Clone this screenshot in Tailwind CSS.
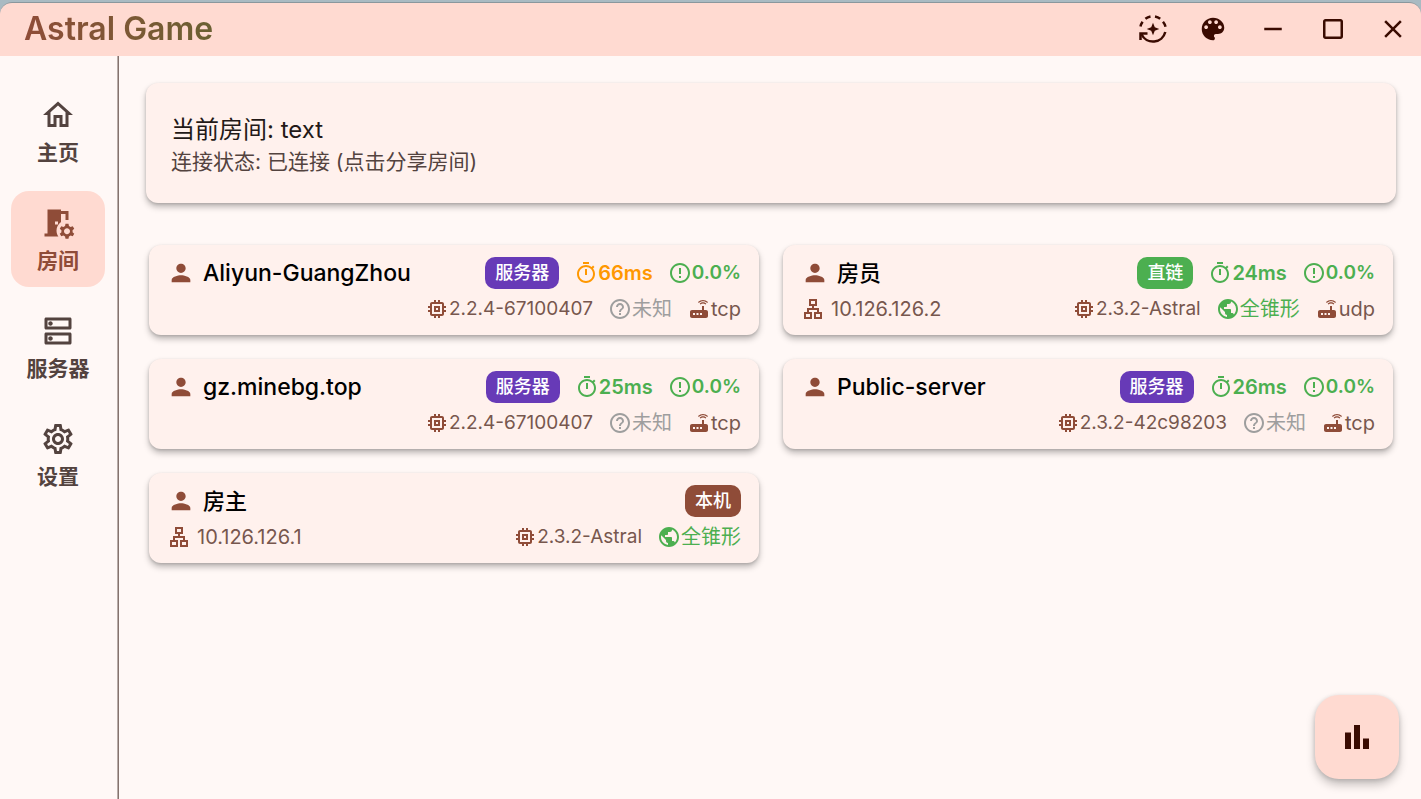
<!DOCTYPE html>
<html lang="zh-CN">
<head>
<meta charset="utf-8">
<title>Astral Game</title>
<script src="https://cdn.jsdelivr.net/npm/@tailwindcss/browser@4"></script>
</head>
<body class="bg-[#a9bac2] font-['Inter','Noto_Sans_CJK_SC',sans-serif]">
<svg class="hidden" aria-hidden="true">
  <symbol id="home" viewBox="0 0 24 24"><path d="M12 5.69l5 4.5V18h-2v-6H9v6H7v-7.81l5-4.5M12 3L2 12h3v8h6v-6h2v6h6v-8h3L12 3z"/></symbol>
  <symbol id="room" viewBox="0 0 24 24"><path d="M14 11.26V6h3v4h2V4h-5V3H5v16H3v2h9.26c-.79-1.13-1.26-2.51-1.26-4 0-2.38 1.19-4.47 3-5.74zM10 11h2v2h-2v-2zm11.69 5.87l1.14-1-1-1.73-1.45.49c-.32-.27-.68-.48-1.08-.63L19 12.500h-2l-.3 1.49c-.4.15-.76.36-1.08.63l-1.45-.49-1 1.73 1.14 1c-.08.5-.08.76 0 1.26l-1.14 1 1 1.73 1.45-.49c.32.27.68.48 1.08.63L17 22.500h2l.3-1.49c.4-.15.76-.36 1.08-.63l1.45.49 1-1.73-1.14-1c.08-.51.08-.77 0-1.27zM18 19.500c-1.1 0-2-.9-2-2s.9-2 2-2 2 .9 2 2-.9 2-2 2z"/></symbol>
  <symbol id="dns" viewBox="0 0 24 24"><path d="M19 15v4H5v-4h14m1-2H4c-.55 0-1 .45-1 1v6c0 .55.45 1 1 1h16c.55 0 1-.45 1-1v-6c0-.55-.45-1-1-1zM7 18.5c-.82 0-1.5-.67-1.5-1.5s.68-1.5 1.5-1.5 1.5.67 1.5 1.5-.67 1.5-1.5 1.5zM19 5v4H5V5h14m1-2H4c-.55 0-1 .45-1 1v6c0 .55.45 1 1 1h16c.55 0 1-.45 1-1V4c0-.55-.45-1-1-1zM7 8.5c-.82 0-1.5-.67-1.5-1.5S6.18 5.5 7 5.5s1.5.68 1.5 1.5S7.83 8.5 7 8.5z"/></symbol>
  <symbol id="settings" viewBox="0 0 24 24"><path d="M19.43 12.98c.04-.32.07-.64.07-.98 0-.34-.03-.66-.07-.98l2.11-1.65c.19-.15.24-.42.12-.64l-2-3.46c-.09-.16-.26-.25-.44-.25-.06 0-.12.01-.17.03l-2.49 1c-.52-.4-1.08-.73-1.69-.98l-.38-2.65C14.46 2.18 14.25 2 14 2h-4c-.25 0-.46.18-.49.42l-.38 2.65c-.61.25-1.17.59-1.69.98l-2.49-1c-.06-.02-.12-.03-.18-.03-.17 0-.34.09-.43.25l-2 3.46c-.13.22-.07.49.12.64l2.11 1.65c-.04.32-.07.65-.07.98 0 .33.03.66.07.98l-2.11 1.65c-.19.15-.24.42-.12.64l2 3.46c.09.16.26.25.44.25.06 0 .12-.01.17-.03l2.49-1c.52.4 1.08.73 1.69.98l.38 2.65c.03.24.24.42.49.42h4c.25 0 .46-.18.49-.42l.38-2.65c.61-.25 1.17-.59 1.69-.98l2.49 1c.06.02.12.03.18.03.17 0 .34-.09.43-.25l2-3.46c.12-.22.07-.49-.12-.64l-2.11-1.65zm-1.98-1.71c.04.31.05.52.05.73 0 .21-.02.43-.05.73l-.14 1.13.89.7 1.08.84-.7 1.21-1.27-.51-1.04-.42-.9.68c-.43.32-.84.56-1.25.73l-1.06.43-.16 1.13-.2 1.35h-1.4l-.19-1.35-.16-1.13-1.06-.43c-.43-.18-.83-.41-1.23-.71l-.91-.7-1.06.43-1.27.51-.7-1.21 1.08-.84.89-.7-.14-1.13c-.03-.31-.05-.54-.05-.74s.02-.43.05-.73l.14-1.13-.89-.7-1.08-.84.7-1.21 1.27.51 1.04.42.9-.68c.43-.32.84-.56 1.25-.73l1.06-.43.16-1.13.2-1.35h1.39l.19 1.35.16 1.13 1.06.43c.43.18.83.41 1.23.71l.91.7 1.06-.43 1.27-.51.7 1.21-1.07.85-.89.7.14 1.13zM12 8c-2.21 0-4 1.79-4 4s1.79 4 4 4 4-1.79 4-4-1.79-4-4-4zm0 6c-1.1 0-2-.9-2-2s.9-2 2-2 2 .9 2 2-.9 2-2 2z"/></symbol>
  <symbol id="person" viewBox="0 0 24 24"><path d="M12 12c2.21 0 4-1.79 4-4s-1.79-4-4-4-4 1.79-4 4 1.79 4 4 4zm0 2c-2.67 0-8 1.34-8 4v2h16v-2c0-2.66-5.33-4-8-4z"/></symbol>
  <symbol id="chip" viewBox="0 0 24 24"><path d="M15 9H9v6h6V9zm-2 4h-2v-2h2v2zm8-2V9h-2V7c0-1.1-.9-2-2-2h-2V3h-2v2h-2V3H9v2H7c-1.1 0-2 .9-2 2v2H3v2h2v2H3v2h2v2c0 1.1.9 2 2 2h2v2h2v-2h2v2h2v-2h2c1.1 0 2-.9 2-2v-2h2v-2h-2v-2h2zm-4 6H7V7h10v10z"/></symbol>
  <symbol id="timer" viewBox="0 0 24 24"><path d="M9 1h6v2H9zm10.03 6.39l1.42-1.42c-.43-.51-.9-.99-1.41-1.41l-1.42 1.42C16.07 4.74 14.12 4 12 4c-4.97 0-9 4.03-9 9s4.02 9 9 9 9-4.03 9-9c0-2.12-.74-4.07-1.97-5.61zM12 20c-3.87 0-7-3.13-7-7s3.13-7 7-7 7 3.13 7 7-3.13 7-7 7zm-1-12h2v6h-2z"/></symbol>
  <symbol id="alert" viewBox="0 0 24 24"><path d="M11 15h2v2h-2zm0-8h2v6h-2zm.99-5C6.47 2 2 6.48 2 12s4.47 10 9.99 10C17.52 22 22 17.52 22 12S17.52 2 11.99 2zM12 20c-4.42 0-8-3.58-8-8s3.58-8 8-8 8 3.58 8 8-3.58 8-8 8z"/></symbol>
  <symbol id="help" viewBox="0 0 24 24"><path d="M11 18h2v-2h-2v2zm1-16C6.48 2 2 6.48 2 12s4.48 10 10 10 10-4.48 10-10S17.52 2 12 2zm0 18c-4.41 0-8-3.59-8-8s3.59-8 8-8 8 3.59 8 8-3.59 8-8 8zm0-14c-2.21 0-4 1.79-4 4h2c0-1.1.9-2 2-2s2 .9 2 2c0 2-3 1.75-3 5h2c0-2.25 3-2.5 3-5 0-2.21-1.79-4-4-4z"/></symbol>
  <symbol id="router" viewBox="0 0 24 24"><path d="M20.2 5.9l.8-.8C19.6 3.7 17.8 3 16 3s-3.6.7-5 2.1l.8.8C13 4.8 14.5 4.2 16 4.2s3 .6 4.2 1.7zm-.9.8c-.9-.9-2.1-1.4-3.3-1.4s-2.4.5-3.3 1.4l.8.8c.7-.7 1.6-1 2.5-1 .9 0 1.8.3 2.5 1l.8-.8zM19 13h-2V9h-2v4H5c-1.1 0-2 .9-2 2v4c0 1.1.9 2 2 2h14c1.1 0 2-.9 2-2v-4c0-1.1-.9-2-2-2zM8 18H6v-2h2v2zm3.5 0h-2v-2h2v2zm3.5 0h-2v-2h2v2z"/></symbol>
  <symbol id="globe" viewBox="0 0 24 24"><path d="M12 2C6.48 2 2 6.48 2 12s4.48 10 10 10 10-4.48 10-10S17.52 2 12 2zm-1 17.93c-3.95-.49-7-3.85-7-7.93 0-.62.08-1.21.21-1.79L9 15v1c0 1.1.9 2 2 2v1.93zm6.9-2.54c-.26-.81-1-1.39-1.9-1.39h-1v-3c0-.55-.45-1-1-1H8v-2h2c.55 0 1-.45 1-1V7h2c1.1 0 2-.9 2-2v-.41c2.93 1.19 5 4.06 5 7.41 0 2.08-.8 3.97-2.1 5.39z"/></symbol>
  <symbol id="lan" viewBox="0 0 24 24"><path d="M13 22h8v-7h-3v-4h-5V9h3V2H8v7h3v2H6v4H3v7h8v-7H8v-2h8v2h-3v7zM10 7V4h4v3h-4zM9 17v3H5v-3h4zm10 0v3h-4v-3h4z"/></symbol>
  <symbol id="palette" viewBox="0 0 24 24"><path d="M12 3c-4.97 0-9 4.03-9 9s4.03 9 9 9c.83 0 1.5-.67 1.5-1.5 0-.39-.15-.74-.39-1.01-.23-.26-.38-.61-.38-.99 0-.83.67-1.5 1.5-1.5H16c2.76 0 5-2.24 5-5 0-4.42-4.03-8-9-8zm-5.5 9c-.83 0-1.5-.67-1.5-1.5S5.67 9 6.5 9 8 9.67 8 10.5 7.33 12 6.5 12zm3-4C8.67 8 8 7.33 8 6.5S8.67 5 9.5 5s1.5.67 1.5 1.5S10.33 8 9.5 8zm5 0c-.83 0-1.5-.67-1.5-1.5S13.67 5 14.5 5s1.5.67 1.5 1.5S15.33 8 14.5 8zm3 4c-.83 0-1.5-.67-1.5-1.5S16.67 9 17.5 9s1.5.67 1.5 1.5-.67 1.5-1.5 1.5z"/></symbol>
</svg>

<div class="flex min-h-screen flex-col pt-[2px]">
  <header class="flex h-[54px] items-center justify-between rounded-t-xl border-t border-[#8a979d] bg-[#ffdad1] pr-[13px] pb-[2px] pl-6">
    <h1 class="bg-linear-to-r from-[#8f4c38] to-[#6a6032] bg-clip-text text-[32px] leading-9 font-semibold text-transparent">Astral Game</h1>
    <div class="flex gap-[30px] text-[#3a0b01]">
      <button type="button" aria-label="更新" class="size-[30px]"><svg class="size-[30px]" viewBox="0 0 30 30" fill="none" stroke="currentColor" stroke-width="2.500"><path d="M2.500 12.500A12.700 12.700 0 0 1 4.600 7.700M7.400 4.800A12.700 12.700 0 0 1 12.500 2.500M17 2.500A12.700 12.700 0 0 1 22.200 4.800M25 7.700A12.700 12.700 0 0 1 27.500 12.700M27.300 18A12.700 12.700 0 0 1 3.500 20.300"/><path d="M9.500 19.500H2.500V26"/><path fill="currentColor" stroke="none" d="M15 8.700l1.800 4.500L21.300 15l-4.500 1.800L15 21.300l-1.800-4.500L8.700 15l4.500-1.800z"/></svg></button>
      <button type="button" aria-label="主题" class="size-[30px]"><svg class="size-[30px] fill-current"><use href="#palette"/></svg></button>
      <button type="button" aria-label="最小化" class="size-[30px]"><svg class="size-[30px] fill-current" viewBox="0 0 24 24"><path d="M19 13H5v-2h14v2z"/></svg></button>
      <button type="button" aria-label="最大化" class="size-[30px]"><svg class="size-[30px] fill-current" viewBox="0 0 24 24"><path d="M18 4H6c-1.100 0-2 .9-2 2v12c0 1.100.9 2 2 2h12c1.100 0 2-.9 2-2V6c0-1.100-.9-2-2-2zm0 14H6V6h12v12z"/></svg></button>
      <button type="button" aria-label="关闭" class="size-[30px]"><svg class="size-[30px] fill-current" viewBox="0 0 24 24"><path d="M19 6.410L17.590 5 12 10.590 6.410 5 5 6.410 10.590 12 5 17.590 6.410 19 12 13.410 17.590 19 19 17.590 13.410 12z"/></svg></button>
    </div>
  </header>

  <div class="flex flex-1 bg-[#fff8f6]">
    <nav class="flex w-[119px] shrink-0 flex-col gap-3 border-r border-[#85736e] pt-[27px] pr-[13px] pl-[11px] text-[21px] leading-6 font-bold text-[#53433f] shadow-[inset_-1px_0_#b8aca8]">
      <a href="#home" class="flex h-24 flex-col items-center justify-center gap-2 rounded-[18px]"><svg class="size-9 fill-current"><use href="#home"/></svg>主页</a>
      <a href="#room" aria-current="page" class="flex h-24 flex-col items-center justify-center gap-2 rounded-[18px] bg-[#ffdad1] text-[#8f4c38]"><svg class="size-9 fill-current"><use href="#room"/></svg>房间</a>
      <a href="#servers" class="flex h-24 flex-col items-center justify-center gap-2 rounded-[18px]"><svg class="size-9 fill-current"><use href="#dns"/></svg>服务器</a>
      <a href="#settings" class="flex h-24 flex-col items-center justify-center gap-2 rounded-[18px]"><svg class="size-9 fill-current"><use href="#settings"/></svg>设置</a>
    </nav>

    <main class="flex-1 pt-[27px] pr-[25px] pl-[27px]">
      <button type="button" class="block w-full rounded-xl bg-[#fff1ed] px-[25px] pt-[29px] pb-[27px] text-left shadow-[0_4px_6px_rgba(0,0,0,0.26),0_1px_3px_rgba(0,0,0,0.14)]">
        <span class="block text-[24px] leading-9 text-[#231917]">当前房间: text</span>
        <span class="block text-[21px] leading-7 text-[#53433f]">连接状态: 已连接 (点击分享房间)</span>
      </button>

      <div class="mx-[3px] mt-[42px] grid grid-cols-2 gap-6 text-[19px] leading-8 text-[#77574e]">
        <article class="h-[90px] rounded-xl bg-[#fff1ed] px-[18px] pt-3 shadow-[0_4px_6px_rgba(0,0,0,0.26),0_1px_3px_rgba(0,0,0,0.14)]">
          <div class="flex h-8 items-center gap-[15px]">
            <h2 class="flex flex-1 items-center gap-2 text-[23px] font-medium text-black"><svg class="size-7 fill-[#8f4c38]"><use href="#person"/></svg>Aliyun-GuangZhou</h2>
            <span class="rounded-[10px] bg-[#673ab7] px-[10px] text-[18px] font-medium text-white">服务器</span>
            <span class="flex items-center text-[20px] font-semibold text-[#ff9800]"><svg class="size-6 fill-current"><use href="#timer"/></svg>66ms</span>
            <span class="flex items-center font-semibold text-[#4caf50]"><svg class="size-6 fill-current"><use href="#alert"/></svg>0.0%</span>
          </div>
          <div class="mt-1 flex h-8 items-center justify-end gap-[15px]">
            <span class="flex items-center"><svg class="size-6 fill-[#8f4c38]"><use href="#chip"/></svg>2.2.4-67100407</span>
            <span class="flex items-center text-[20px] text-[#9e9e9e]"><svg class="size-6 fill-current"><use href="#help"/></svg>未知</span>
            <span class="flex items-center text-[20px]"><svg class="size-6 fill-[#8f4c38]"><use href="#router"/></svg>tcp</span>
          </div>
        </article>

        <article class="h-[90px] rounded-xl bg-[#fff1ed] px-[18px] pt-3 shadow-[0_4px_6px_rgba(0,0,0,0.26),0_1px_3px_rgba(0,0,0,0.14)]">
          <div class="flex h-8 items-center gap-[15px]">
            <h2 class="flex flex-1 items-center gap-2 text-[22px] font-medium text-black"><svg class="size-7 fill-[#8f4c38]"><use href="#person"/></svg>房员</h2>
            <span class="rounded-[10px] bg-[#4caf50] px-[10px] text-[18px] font-medium text-white">直链</span>
            <span class="flex items-center text-[20px] font-semibold text-[#4caf50]"><svg class="size-6 fill-current"><use href="#timer"/></svg>24ms</span>
            <span class="flex items-center font-semibold text-[#4caf50]"><svg class="size-6 fill-current"><use href="#alert"/></svg>0.0%</span>
          </div>
          <div class="mt-1 flex h-8 items-center justify-end gap-[15px]">
            <span class="flex flex-1 items-center gap-[6px] text-[20px]"><svg class="size-6 fill-[#8f4c38]"><use href="#lan"/></svg>10.126.126.2</span>
            <span class="flex items-center"><svg class="size-6 fill-[#8f4c38]"><use href="#chip"/></svg>2.3.2-Astral</span>
            <span class="flex items-center text-[20px] text-[#4caf50]"><svg class="size-6 fill-current"><use href="#globe"/></svg>全锥形</span>
            <span class="flex items-center text-[20px]"><svg class="size-6 fill-[#8f4c38]"><use href="#router"/></svg>udp</span>
          </div>
        </article>

        <article class="h-[90px] rounded-xl bg-[#fff1ed] px-[18px] pt-3 shadow-[0_4px_6px_rgba(0,0,0,0.26),0_1px_3px_rgba(0,0,0,0.14)]">
          <div class="flex h-8 items-center gap-[15px]">
            <h2 class="flex flex-1 items-center gap-2 text-[23px] font-medium text-black"><svg class="size-7 fill-[#8f4c38]"><use href="#person"/></svg>gz.minebg.top</h2>
            <span class="rounded-[10px] bg-[#673ab7] px-[10px] text-[18px] font-medium text-white">服务器</span>
            <span class="flex items-center text-[20px] font-semibold text-[#4caf50]"><svg class="size-6 fill-current"><use href="#timer"/></svg>25ms</span>
            <span class="flex items-center font-semibold text-[#4caf50]"><svg class="size-6 fill-current"><use href="#alert"/></svg>0.0%</span>
          </div>
          <div class="mt-1 flex h-8 items-center justify-end gap-[15px]">
            <span class="flex items-center"><svg class="size-6 fill-[#8f4c38]"><use href="#chip"/></svg>2.2.4-67100407</span>
            <span class="flex items-center text-[20px] text-[#9e9e9e]"><svg class="size-6 fill-current"><use href="#help"/></svg>未知</span>
            <span class="flex items-center text-[20px]"><svg class="size-6 fill-[#8f4c38]"><use href="#router"/></svg>tcp</span>
          </div>
        </article>

        <article class="h-[90px] rounded-xl bg-[#fff1ed] px-[18px] pt-3 shadow-[0_4px_6px_rgba(0,0,0,0.26),0_1px_3px_rgba(0,0,0,0.14)]">
          <div class="flex h-8 items-center gap-[15px]">
            <h2 class="flex flex-1 items-center gap-2 text-[23px] font-medium text-black"><svg class="size-7 fill-[#8f4c38]"><use href="#person"/></svg>Public-server</h2>
            <span class="rounded-[10px] bg-[#673ab7] px-[10px] text-[18px] font-medium text-white">服务器</span>
            <span class="flex items-center text-[20px] font-semibold text-[#4caf50]"><svg class="size-6 fill-current"><use href="#timer"/></svg>26ms</span>
            <span class="flex items-center font-semibold text-[#4caf50]"><svg class="size-6 fill-current"><use href="#alert"/></svg>0.0%</span>
          </div>
          <div class="mt-1 flex h-8 items-center justify-end gap-[15px]">
            <span class="flex items-center"><svg class="size-6 fill-[#8f4c38]"><use href="#chip"/></svg>2.3.2-42c98203</span>
            <span class="flex items-center text-[20px] text-[#9e9e9e]"><svg class="size-6 fill-current"><use href="#help"/></svg>未知</span>
            <span class="flex items-center text-[20px]"><svg class="size-6 fill-[#8f4c38]"><use href="#router"/></svg>tcp</span>
          </div>
        </article>

        <article class="h-[90px] rounded-xl bg-[#fff1ed] px-[18px] pt-3 shadow-[0_4px_6px_rgba(0,0,0,0.26),0_1px_3px_rgba(0,0,0,0.14)]">
          <div class="flex h-8 items-center gap-[15px]">
            <h2 class="flex flex-1 items-center gap-2 text-[22px] font-medium text-black"><svg class="size-7 fill-[#8f4c38]"><use href="#person"/></svg>房主</h2>
            <span class="rounded-[10px] bg-[#8f4c38] px-[10px] text-[18px] font-medium text-white">本机</span>
          </div>
          <div class="mt-1 flex h-8 items-center justify-end gap-[15px]">
            <span class="flex flex-1 items-center gap-[6px] text-[20px]"><svg class="size-6 fill-[#8f4c38]"><use href="#lan"/></svg>10.126.126.1</span>
            <span class="flex items-center"><svg class="size-6 fill-[#8f4c38]"><use href="#chip"/></svg>2.3.2-Astral</span>
            <span class="flex items-center text-[20px] text-[#4caf50]"><svg class="size-6 fill-current"><use href="#globe"/></svg>全锥形</span>
          </div>
        </article>
      </div>
    </main>
  </div>
</div>

<button type="button" aria-label="统计" class="fixed right-[22px] bottom-5 flex size-[84px] items-center justify-center rounded-3xl bg-[#ffdad1] text-[#3a0b01] shadow-[0_6px_10px_rgba(0,0,0,0.22),0_1px_5px_rgba(0,0,0,0.16)]"><svg class="size-9 fill-current" viewBox="0 0 24 24"><path d="M4 9h4v11H4zm12 4h4v7h-4zm-6-9h4v16h-4z"/></svg></button>
</body>
</html>
